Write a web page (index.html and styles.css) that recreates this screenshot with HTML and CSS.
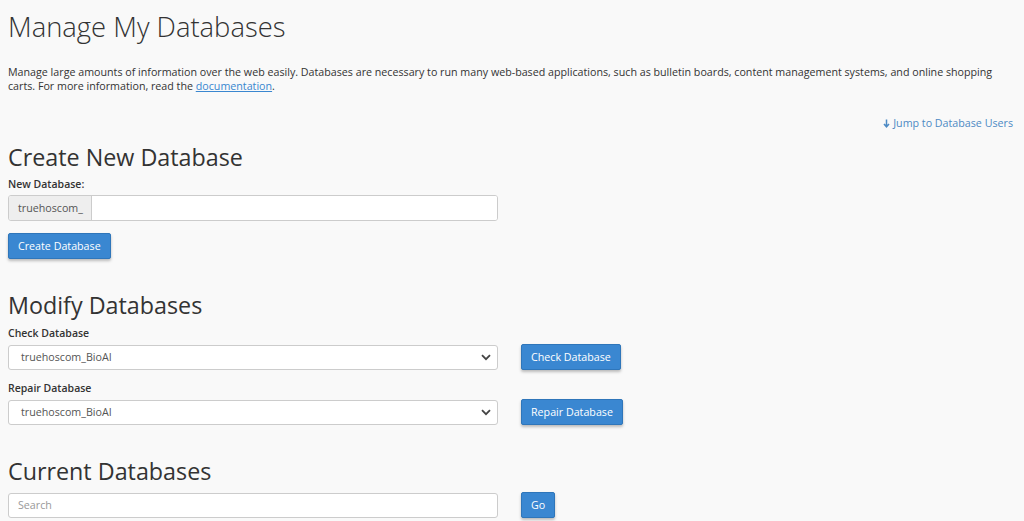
FILE: index.html
```html
<!DOCTYPE html>
<html>
    <head>
        <meta charset="UTF-8">
        <title>Manage My Databases</title>
        <link rel="stylesheet" href="styles.css">
    </head>
    <body>
        <div id="content">
            <h1 class="page-title">Manage My Databases</h1>
            <p class="description">Manage large amounts of information over the web easily. Databases are necessary to run many web-based applications, such as bulletin boards, content management systems, and online shopping carts. For more information, read the <a href="#">documentation</a>.</p>

            <div class="jump">
                <a href="#users"><svg class="arrow" width="7" height="9" viewBox="0 0 7 9"><path d="M3.5 0.5 V7.5 M1 5 L3.5 7.8 L6 5" fill="none" stroke="#4d8ac4" stroke-width="1.5"/></svg> Jump to Database Users</a>
            </div>

            <!--create-->
            <section class="create">
                <h2>Create New Database</h2>
                <label for="db">New Database:</label>
                <div class="input-group">
                    <span class="addon">truehoscom_</span>
                    <input type="text" id="db">
                </div>
                <button class="btn">Create Database</button>
            </section>

            <!--modify-->
            <section class="modify">
                <h2>Modify Databases</h2>
                <label for="check">Check Database</label>
                <div class="row">
                    <div class="select">truehoscom_BioAI
                        <svg class="caret" width="10" height="7" viewBox="0 0 10 7"><path d="M1 1.2 L5 5.2 L9 1.2" fill="none" stroke="#444" stroke-width="1.8"/></svg>
                    </div>
                    <button class="btn">Check Database</button>
                </div>
                <label for="repair">Repair Database</label>
                <div class="row">
                    <div class="select">truehoscom_BioAI
                        <svg class="caret" width="10" height="7" viewBox="0 0 10 7"><path d="M1 1.2 L5 5.2 L9 1.2" fill="none" stroke="#444" stroke-width="1.8"/></svg>
                    </div>
                    <button class="btn">Repair Database</button>
                </div>
            </section>

            <!--current-->
            <section class="current">
                <h2>Current Databases</h2>
                <div class="row">
                    <input type="text" class="search" placeholder="Search">
                    <button class="btn">Go</button>
                </div>
            </section>
        </div>
    </body>
</html>
```

FILE: styles.css
```css
body{
    margin: 0;
    background-color: #f9f9f9;
    font-family: 'Open Sans', sans-serif;
    color: #333;
    font-size: 10.7px;
}
#content{
    padding: 0 8px;
}
.page-title{
    font-size: 27.4px;
    font-weight: 300;
    margin: 0;
    padding-top: 9px;
    line-height: 36px;
}
.description{
    margin: 20px 0 0 0;
    line-height: 14px;
    color: #333;
}
.description a{
    color: #3a87d0;
}
.jump{
    text-align: right;
    margin-top: 23px;
    padding-right: 3px;
    line-height: 14px;
}
.jump a{
    color: #4d8ac4;
    text-decoration: none;
}
.jump .arrow{
    vertical-align: -1px;
}
h2{
    font-size: 23.3px;
    font-weight: 400;
    margin: 0;
    line-height: 30px;
}
.create h2{
    margin-top: 12px;
}
label{
    display: block;
    font-weight: 600;
    font-size: 10.5px;
    line-height: 14px;
    margin-top: 5px;
}
.input-group{
    display: flex;
    width: 490px;
    height: 26px;
    margin-top: 4px;
    border: 1px solid #ccc;
    border-radius: 3px;
    box-sizing: border-box;
    background: #fff;
    overflow: hidden;
}
.addon{
    background: #eee;
    border-right: 1px solid #ccc;
    padding: 0 8px 0 9px;
    line-height: 24px;
    color: #555;
}
.input-group input{
    flex: 1;
    border: none;
    outline: none;
}
.btn{
    background-color: #3a87d1;
    border: 1px solid #2f76ba;
    border-radius: 2px;
    color: #fff;
    font-family: 'Open Sans', sans-serif;
    font-size: 10.7px;
    height: 26px;
    padding: 0 9px;
    box-shadow: 0 2px 3px rgba(0,0,0,0.25);
}
.create .btn{
    margin-top: 12px;
}
.modify{
    margin-top: 31px;
}
.modify label{
    margin-top: 6px;
}
.modify label + .row{
    margin-top: 4px;
}
.row{
    display: flex;
    align-items: center;
    gap: 23px;
    margin-bottom: 11px;
}
.select{
    width: 490px;
    height: 25px;
    box-sizing: border-box;
    border: 1px solid #ccc;
    border-radius: 3px;
    background: #fff;
    display: flex;
    align-items: center;
    justify-content: space-between;
    padding: 0 6px 0 12px;
    color: #555;
}
.current{
    margin-top: 31px;
}
.current .row{
    margin-top: 6px;
}
.search{
    width: 490px;
    height: 25px;
    box-sizing: border-box;
    border: 1px solid #ccc;
    border-radius: 3px;
    padding: 0 9px;
    font-family: 'Open Sans', sans-serif;
    font-size: 10.7px;
}
.search::placeholder{
    color: #999;
}
```
